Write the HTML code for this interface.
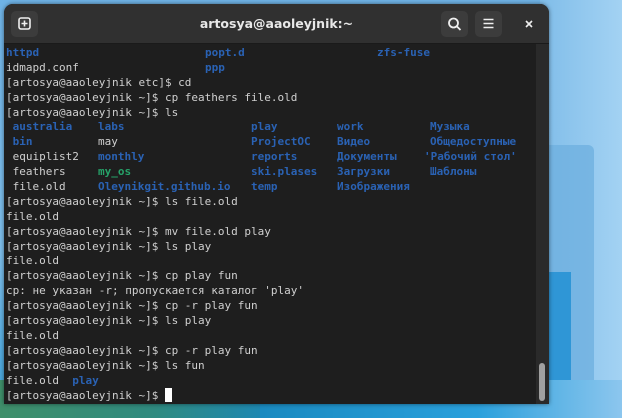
<!DOCTYPE html>
<html><head><meta charset="utf-8"><style>
html,body{margin:0;padding:0;width:622px;height:418px;overflow:hidden}
body{position:relative;background:linear-gradient(180deg,#6fb3e6 0%,#7dbdea 60%,#3aa0d8 100%)}
.bgl{position:absolute;left:0;top:380px;width:260px;height:38px;background:linear-gradient(90deg,#3f8f6a,#2f8a80 60%,#1e88b0)}
.bgm{position:absolute;left:260px;top:380px;width:362px;height:38px;background:linear-gradient(90deg,#1a8ac0,#2aa0dc 60%,#8cc6ee)}
.bgr{position:absolute;left:540px;top:0;width:82px;height:418px;background:linear-gradient(90deg,#80bde9,#a3d2f3)}
.panel{position:absolute;left:549px;top:145px;width:45px;height:250px;background:#6fb0e0;border-radius:0 6px 6px 0;opacity:.8}
.panel2{position:absolute;left:549px;top:272px;width:22px;height:140px;background:#2f96d6}
.win{position:absolute;left:4px;top:4px;width:545px;height:400px;background:#1e1e1e;border-radius:9px 9px 0 0;overflow:hidden;box-shadow:0 0 4px rgba(0,0,0,.5)}
.hdr{position:absolute;left:0;top:0;width:545px;height:39px;background:#303030;border-bottom:1px solid #1a1a1a}
.btn{position:absolute;top:7px;width:27px;height:26px;background:#3c3c3c;border-radius:5px}
.title{position:absolute;left:0;width:545px;top:12px;text-align:center;color:#e8e8e8;font:bold 12.5px "DejaVu Sans","Liberation Sans",sans-serif}
.term{position:absolute;left:2px;top:42px;font-family:"DejaVu Sans Mono","Liberation Mono",monospace;font-size:11px;line-height:14.9px;color:#d0d0d0}
.l{position:relative;height:14.9px;white-space:pre}
.l span{position:absolute;top:0}
.b{color:#2a62b4;font-weight:bold}
.g{color:#26a269;font-weight:bold}
.sb{position:absolute;left:532px;top:40px;width:13px;height:360px;background:#2a2a2a}
.th{position:absolute;left:535px;top:359px;width:6px;height:38px;background:#a0a0a0;border-radius:3px}
.cur{display:inline-block;width:6.6px;height:14px;background:#fff;vertical-align:-3px}
</style></head><body>
<div class="bgr"></div><div class="panel"></div><div class="panel2"></div><div class="bgl"></div><div class="bgm"></div>
<div class="win">
 <div class="hdr">
  <div class="btn" style="left:7px"><svg width="27" height="26" viewBox="0 0 27 26"><rect x="8" y="7" width="11" height="11" rx="2" fill="none" stroke="#eee" stroke-width="1.6"/><path d="M13.5 9.5v6M10.5 12.5h6" stroke="#eee" stroke-width="1.6"/></svg></div>
  <div class="title">artosya@aaoleyjnik:~</div>
  <div class="btn" style="left:437px"><svg width="27" height="26" viewBox="0 0 27 26"><circle cx="12.5" cy="12" r="4.5" fill="none" stroke="#eee" stroke-width="1.8"/><path d="M16 15.5l3.5 3.5" stroke="#eee" stroke-width="1.8"/></svg></div>
  <div class="btn" style="left:471px"><svg width="27" height="26" viewBox="0 0 27 26"><path d="M8.5 8.5h10M8.5 12.5h10M8.5 16.5h10" stroke="#eee" stroke-width="1.6"/></svg></div>
  <svg style="position:absolute;left:520px;top:15px" width="10" height="10" viewBox="0 0 10 10"><path d="M2 2l6 6M8 2l-6 6" stroke="#eee" stroke-width="1.6"/></svg>
 </div>
 <div class="term"><div class="l"><span class="b" style="left:0">httpd</span><span class="b" style="left:199px">popt.d</span><span class="b" style="left:371px">zfs-fuse</span></div><div class="l"><span style="left:0">idmapd.conf</span><span class="b" style="left:199px">ppp</span></div><div class="l">[artosya@aaoleyjnik etc]$ cd</div><div class="l">[artosya@aaoleyjnik ~]$ cp feathers file.old</div><div class="l">[artosya@aaoleyjnik ~]$ ls</div><div class="l"><span class="b" style="left:6.6px">australia</span><span class="b" style="left:92px">labs</span><span class="b" style="left:245px">play</span><span class="b" style="left:331px">work</span><span class="b" style="left:424px">Музыка</span></div><div class="l"><span class="b" style="left:6.6px">bin</span><span style="left:92px">may</span><span class="b" style="left:245px">ProjectOC</span><span class="b" style="left:331px">Видео</span><span class="b" style="left:424px">Общедоступные</span></div><div class="l"><span style="left:6.6px">equiplist2</span><span class="b" style="left:92px">monthly</span><span class="b" style="left:245px">reports</span><span class="b" style="left:331px">Документы</span><span class="b" style="left:418px">'Рабочий стол'</span></div><div class="l"><span style="left:6.6px">feathers</span><span class="g" style="left:92px">my_os</span><span class="b" style="left:245px">ski.plases</span><span class="b" style="left:331px">Загрузки</span><span class="b" style="left:424px">Шаблоны</span></div><div class="l"><span style="left:6.6px">file.old</span><span class="b" style="left:92px">Oleynikgit.github.io</span><span class="b" style="left:245px">temp</span><span class="b" style="left:331px">Изображения</span></div><div class="l">[artosya@aaoleyjnik ~]$ ls file.old</div><div class="l">file.old</div><div class="l">[artosya@aaoleyjnik ~]$ mv file.old play</div><div class="l">[artosya@aaoleyjnik ~]$ ls play</div><div class="l">file.old</div><div class="l">[artosya@aaoleyjnik ~]$ cp play fun</div><div class="l">cp: не указан -r; пропускается каталог 'play'</div><div class="l">[artosya@aaoleyjnik ~]$ cp -r play fun</div><div class="l">[artosya@aaoleyjnik ~]$ ls play</div><div class="l">file.old</div><div class="l">[artosya@aaoleyjnik ~]$ cp -r play fun</div><div class="l">[artosya@aaoleyjnik ~]$ ls fun</div><div class="l">file.old  <b class="b">play</b></div><div class="l">[artosya@aaoleyjnik ~]$ <i class="cur"></i></div></div>
 <div class="sb"></div><div class="th"></div>
</div>
</body></html>
